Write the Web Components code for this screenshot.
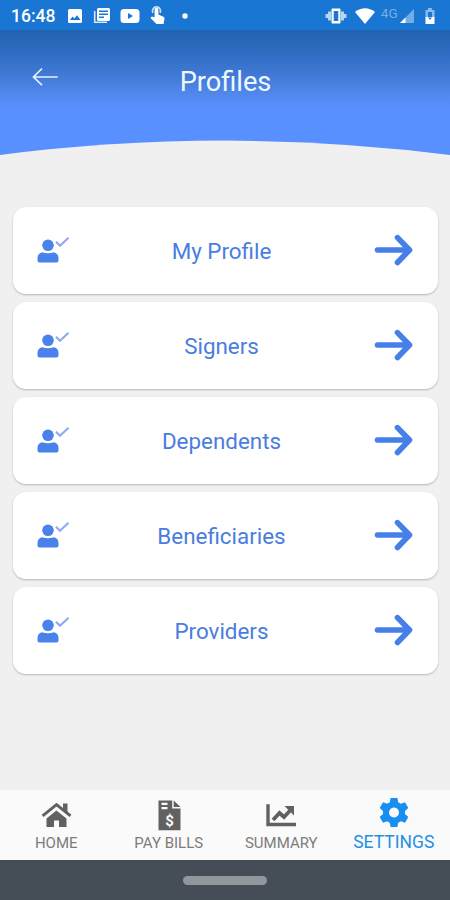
<!DOCTYPE html>
<html lang="en">
<head>
<meta charset="utf-8">
<title>Profiles</title>
<style>
html,body{margin:0;height:100%}
body{font-family:Roboto,"Liberation Sans",sans-serif;background:#f0f0f0;overflow:hidden}
</style>
</head>
<body>
<profiles-app></profiles-app>
<script>
const define = (name, html) => customElements.define(name, class extends HTMLElement {
  constructor() {
    super();
    const t = document.createElement('template');
    t.innerHTML = html;
    this.attachShadow({mode: 'open'}).append(t.content.cloneNode(true));
  }
});

define('status-bar', `
<style>
:host{display:flex;align-items:center;height:30px;box-sizing:border-box;padding:1px 14px 0 11px;background:#1976d2;color:#fff;justify-content:space-between}
div{display:flex;align-items:center}
svg{display:block;fill:#fff}
.time{font-size:17.5px;font-weight:500;line-height:30px;width:56px}
.net{font-size:13.500px;line-height:13px;color:#77aee6;margin:-5px 1px 0 5px;letter-spacing:.2px}
</style>
<div>
  <span class="time">16:48</span>
  <svg width="16" height="16" viewBox="0 0 16 16"><path fill-rule="evenodd" d="M2.500 1h11a1.500 1.500 0 0 1 1.500 1.500v11a1.500 1.500 0 0 1-1.500 1.500h-11A1.500 1.500 0 0 1 1 13.500v-11A1.500 1.500 0 0 1 2.500 1zM3 12h10.500L10 7.200l-2.600 3.400-1.900-2.200z"/></svg>
  <svg style="margin-left:10px" width="18" height="18" viewBox="0 0 18 18"><path fill-rule="evenodd" d="M5.500 1h10A1.500 1.500 0 0 1 17 2.500v10a1.500 1.500 0 0 1-1.500 1.500h-10A1.500 1.500 0 0 1 4 12.500v-10A1.500 1.500 0 0 1 5.500 1zM6 3.500V5h9V3.500zM6 6.500V8h9V6.500zM6 9.500V11h5V9.500z"/><path d="M1.700 4v11.300H14" fill="none" stroke="#d6e7f8" stroke-width="1.600"/></svg>
  <svg style="margin-left:9px" width="20" height="16" viewBox="0 0 20 16"><path fill-rule="evenodd" d="M4 1h12q3.500 0 3.500 3.500v7Q19.500 15 16 15H4Q.5 15 .5 11.500v-7Q.5 1 4 1zM8 5v6l5-3z"/></svg>
  <svg style="margin-left:9px" width="18" height="19" viewBox="0 0 18 19"><path d="M5.600 3.600a1.900 1.900 0 0 1 3.800 0V8.500l5 2.200q1.300.6 1.100 1.900l-.9 5.400H7.500L1.500 12l1.300-1.600 2.800.8z"/><path d="M4 6.800a4 4 0 1 1 7 0" fill="none" stroke="#c9dff6" stroke-width="1.700"/></svg>
  <svg style="margin-left:14px" width="8" height="8" viewBox="0 0 8 8"><circle cx="4" cy="4" r="2.700"/></svg>
</div>
<div>
  <svg width="22" height="18" viewBox="0 0 22 18"><path fill-rule="evenodd" d="M7.500 1.500h7q1 0 1 1v13q0 1-1 1h-7q-1 0-1-1v-13q0-1 1-1zM8.700 4v10h4.600V4z"/><path d="M3 4.500h3v9H3V11H.5V7H3zM19 4.500h-3v9h3V11h2.500V7H19z" fill="#b7d5f2"/></svg>
  <svg style="margin-left:7px" width="22" height="18" viewBox="0 0 22 18"><path d="M1 5Q11-2.500 21 5L11 17z"/></svg>
  <span class="net">4G</span>
  <svg width="16" height="18" viewBox="0 0 16 18"><path d="M15 2v14H1z" fill="#76ace5"/><path d="M6.500 10.500V16H1z"/></svg>
  <svg style="margin-left:9px" width="12" height="18" viewBox="0 0 12 18"><path fill-rule="evenodd" fill="#88b9ea" d="M4 1h4v2h2.500v8h-9V3H4zM4 5v5h4V5z"/><path fill-rule="evenodd" d="M1.500 10h2.300L6 13l2.200-3h2.300v7h-9z"/></svg>
</div>`);

define('page-header', `
<style>
:host{display:grid;grid-template-columns:90px 1fr 90px;grid-template-rows:102px 24px;height:126px;color:#fff;background:linear-gradient(#2063b0 0,#2a69bb 16px,#4079d6 45px,#5389ee 66px,#5990ff 78px)}
.back{margin:37px 0 0 31px}
h1{font-size:27.200px;line-height:32px;font-weight:400;margin:36px 0 0;padding-left:1px;text-align:center;color:#eef7ff;white-space:nowrap}
.curve{grid-row:2;grid-column:1/-1;width:100%;height:24px;display:block}
</style>
<svg class="back" width="28" height="20" viewBox="0 0 28 20" fill="none" stroke="#e7f4ff" stroke-width="1.700"><path d="M26.700 10H3M11 1.500L2.500 10 11 18.200"/></svg>
<h1><slot></slot></h1>
<svg class="curve" viewBox="0 0 450 24" preserveAspectRatio="none"><path d="M0 23Q108 9 225 8.600Q342 9 450 23V24H0z" fill="#f0f0f0"/></svg>`);

define('profile-card', `
<style>
:host{display:grid;grid-template-columns:58px 1fr 64px;align-items:center;height:87px;border-radius:13px;background:#fff;box-shadow:0 1px 2px rgba(0,0,0,.24);color:#4a7de0}
.user{margin-left:24px;margin-top:1px}
span{text-align:center;font-size:22.400px;line-height:28px;padding-right:2px}
.go{margin-top:-1px;margin-left:-1px}
</style>
<svg class="user" width="34" height="30" viewBox="0 0 34 30"><circle cx="11" cy="9.300" r="5.800" fill="#4882ea"/><path d="M5 16.300Q11 18 17 16.300Q21.500 17.500 21.500 22v2.500q0 2-2 2h-17q-2 0-2-2V22Q.5 17.500 5 16.300z" fill="#4882ea"/><path d="M19 5.800l4 3.900L31.500 1.800" fill="none" stroke="#8faaf0" stroke-width="2.200"/></svg>
<span><slot></slot></span>
<svg class="go" width="40" height="34" viewBox="0 0 40 34" fill="none" stroke="#467fe8" stroke-width="5.600" stroke-linecap="round" stroke-linejoin="round"><path d="M4.500 17H36M24.500 4.600L36.500 17 24.500 29.500"/></svg>`);

define('nav-tab', `
<style>
:host{display:flex;flex-direction:column;align-items:center;color:#7c7c7c;font-size:15px;line-height:18px}
:host([active]){color:#2490df;font-size:17.500px}
.icon{height:34px;width:34px;margin:7px 0 3px}
.label{white-space:nowrap}
:host([active]) .label{margin-top:-1px}
</style>
<div class="icon"><slot name="icon"></slot></div>
<div class="label"><slot></slot></div>`);

define('tab-bar', `
<style>
:host{display:grid;grid-template-columns:repeat(4,1fr);height:70px;background:#fafafa}
svg{display:block;fill:#616161}
</style>
<nav-tab><svg slot="icon" width="34" height="34" viewBox="0 0 34 34"><path d="M17.400 13.500L27.500 21.500V30H20v-6.500h-5V30H7.500v-8.500z"/><path d="M3.600 18.800L17.500 7.600l14 11.200" fill="none" stroke="#616161" stroke-width="3"/><path d="M24 6.500h4.500V16L24 12z"/></svg>HOME</nav-tab>
<nav-tab><svg slot="icon" width="34" height="34" viewBox="0 0 34 34"><path fill-rule="evenodd" d="M6.500 3.500h13.700V11.500h8.300v21.700h-22zM9.500 5.800V8h6V5.800zM9.500 10V12.200h6V10z"/><path d="M21.700 3.500l6.800 6.500h-6.800z"/><text x="17.500" y="28.500" text-anchor="middle" font-size="15" font-weight="700" fill="#fafafa">$</text></svg>PAY BILLS</nav-tab>
<nav-tab><svg slot="icon" width="34" height="34" viewBox="0 0 34 34"><path d="M4 7.300v20.200h28" fill="none" stroke="#616161" stroke-width="3.400"/><path d="M9 23l6.500-7 4.500 4 7.500-8" fill="none" stroke="#616161" stroke-width="3.800"/><path d="M20.500 9h9.500v9.500z"/></svg>SUMMARY</nav-tab>
<nav-tab active><svg slot="icon" width="34" height="34" viewBox="0 0 34 34"><path style="fill:#168ff0" fill-rule="evenodd" d="M13.600 1h6.800l.8 4.300 2.700 1.500 4.100-1.500 3.300 5.700-3.300 2.900v3.200l3.300 2.900-3.300 5.700-4.100-1.500-2.700 1.500-.8 4.300h-6.800l-.8-4.300-2.700-1.500L6 25.700 2.700 20 6 17.100v-3.200L2.700 11 6 5.300l4.100 1.500 2.700-1.500zM17 10.500a5 5 0 1 0 .01 0z"/></svg>SETTINGS</nav-tab>`);

define('gesture-bar', `
<style>
:host{display:flex;justify-content:center;align-items:center;height:40px;background:#454d56}
i{width:84px;height:9px;border-radius:5px;background:#92979c}
</style><i></i>`);

define('profiles-app', `
<style>
:host{display:flex;flex-direction:column;height:100vh;background:#f0f0f0}
main{flex:1;display:flex;flex-direction:column;gap:8px;padding:51px 12px 0 13px}
</style>
<status-bar></status-bar>
<page-header>Profiles</page-header>
<main>
<profile-card>My Profile</profile-card>
<profile-card>Signers</profile-card>
<profile-card>Dependents</profile-card>
<profile-card>Beneficiaries</profile-card>
<profile-card>Providers</profile-card>
</main>
<tab-bar></tab-bar>
<gesture-bar></gesture-bar>`);
</script>
</body>
</html>
